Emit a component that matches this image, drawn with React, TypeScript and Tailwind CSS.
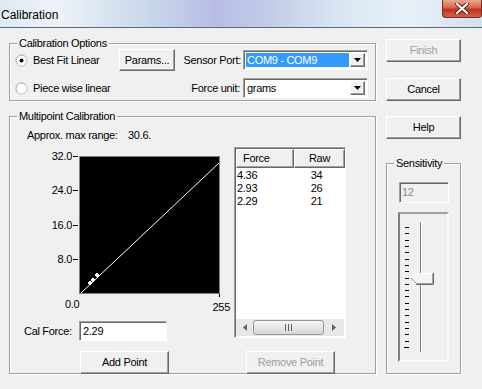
import React from 'react';

const raised =
  'bg-[#f0f0f0] border border-t-white border-l-white border-r-[#696969] border-b-[#696969] shadow-[inset_-1px_-1px_0_#a0a0a0]';
const sunken =
  'border border-t-[#a0a0a0] border-l-[#a0a0a0] border-r-white border-b-white shadow-[inset_1px_1px_0_#696969]';
const etched = 'border border-[#a0a0a0] shadow-[inset_1px_1px_0_#fff,1px_1px_0_#fff]';

const Radio = ({ checked }: { checked?: boolean }) => (
  <svg width="13" height="13" viewBox="0 0 13 13" className="shrink-0">
    <circle cx="6.5" cy="6.5" r="5.5" fill="#fff" stroke="#a0a0a0" />
    <path d="M2.6 10.4 A5.5 5.5 0 0 0 10.4 2.6" fill="none" stroke="#e3e3e3" />
    {checked && <circle cx="6.5" cy="6.5" r="2" fill="#000" />}
  </svg>
);

const Button = ({ label, disabled, className }: { label: string; disabled?: boolean; className?: string }) => (
  <div className={`${raised} flex items-center justify-center ${disabled ? 'text-[#a0a0a0]' : 'text-black'} ${className ?? ''}`}>
    {label}
  </div>
);

const Select = ({ value, selected }: { value: string; selected?: boolean }) => (
  <div className={`${sunken} bg-white w-[125px] h-[20px] flex items-stretch p-[2px]`}>
    <div className={`flex-1 flex items-center pl-[1px] ${selected ? 'bg-[#3399ff] text-white' : 'text-black'}`}>{value}</div>
    <div className={`${raised} w-[15px] ml-[1px] flex items-center justify-center`}>
      <svg width="7" height="4" viewBox="0 0 7 4">
        <path d="M0 0h7L3.5 4z" fill="#000" />
      </svg>
    </div>
  </div>
);

const Legend = ({ children }: { children: React.ReactNode }) => (
  <span className="absolute -top-[8px] left-[7px] px-[2px] bg-[#f0f0f0] leading-[14px]">{children}</span>
);

const rows = [
  { force: '4.36', raw: '34' },
  { force: '2.93', raw: '26' },
  { force: '2.29', raw: '21' },
];

const yLabels = [
  { label: '32.0', top: -7 },
  { label: '24.0', top: 27 },
  { label: '16.0', top: 62 },
  { label: '8.0', top: 96 },
];

const ticks = Array.from({ length: 20 }, (_, i) => i);

export default function App() {
  return (
    <div className="w-[482px] h-[389px] overflow-hidden bg-[#f0f0f0] text-[11px] tracking-[-0.3px] font-['Liberation_Sans',Arial,sans-serif] text-black select-none">
      {/* title bar */}
      <div className="relative h-[28px] border-b border-[#5a6a7a] bg-[linear-gradient(90deg,#dfe9f3_0%,#eef3f8_12%,#c9d8ea_30%,#b9bde6_45%,#c2cbe8_55%,#d8e6f2_70%,#e9f1f8_85%,#cfe0ee_100%)]">
        <span className="absolute left-[1px] top-[7px] text-[12px] tracking-normal leading-[16px]">Calibration</span>
        <div className="absolute right-0 top-0 w-[40px] h-[18px] rounded-b-[4px] border border-t-0 border-[#7a2a20] bg-[linear-gradient(180deg,#e9a796_0%,#d9644e_45%,#c2331c_55%,#d0604a_100%)] flex items-center justify-center">
          <svg width="14" height="11" viewBox="0 0 14 11">
            <path d="M2 1l10 9M12 1L2 10" stroke="#5a2018" strokeWidth="4" strokeLinecap="round" />
            <path d="M2 1l10 9M12 1L2 10" stroke="#fff" strokeWidth="2.2" strokeLinecap="round" />
          </svg>
        </div>
      </div>

      <div className="flex pl-[9px]">
        {/* left column */}
        <div className="w-[367px]">
          {/* Calibration Options */}
          <div className={`relative mt-[15px] h-[58px] ${etched} pl-[5px] pr-[7px] pt-[5px]`}>
            <Legend>Calibration Options</Legend>
            <div className="flex items-center h-[22px]">
              <div className="w-[104px] flex items-center gap-[5px]">
                <Radio checked />
                <span>Best Fit Linear</span>
              </div>
              <Button label="Params..." className="w-[56px] h-[22px]" />
              <span className="flex-1 text-right pr-[2px]">Sensor Port:</span>
              <Select value="COM9 - COM9" selected />
            </div>
            <div className="flex items-center h-[22px] mt-[6px]">
              <div className="w-[104px] flex items-center gap-[5px]">
                <Radio />
                <span>Piece wise linear</span>
              </div>
              <span className="flex-1 text-right pr-[3px]">Force unit:</span>
              <Select value="grams" />
            </div>
          </div>

          {/* Multipoint Calibration */}
          <div className={`relative mt-[15px] h-[258px] ${etched}`}>
            <Legend>Multipoint Calibration</Legend>
            <div className="flex">
              <div className="w-[224px]">
                <div className="pt-[12px] pl-[17px] leading-[13px] flex">
                  <span className="w-[101px]">Approx. max range:</span>
                  <span>30.6.</span>
                </div>
                {/* chart */}
                <div className="relative ml-[69px] mt-[14px] w-[141px] h-[138px] border border-[#808080] bg-black">
                  {yLabels.map((y) => (
                    <div key={y.label} className="absolute right-[141px] flex items-center leading-[13px]" style={{ top: y.top }}>
                      <span>{y.label}</span>
                      <span className="ml-[1px] w-[5px] h-[1px] bg-black" />
                    </div>
                  ))}
                  <span className="absolute -left-[15px] top-[141px] leading-[13px]">0.0</span>
                  <span className="absolute right-[-1px] top-[137px] w-[1px] h-[3px] bg-black" />
                  <span className="absolute -right-[11px] top-[144px] leading-[13px]">255</span>
                  <svg width="139" height="136" viewBox="0 0 139 136" className="block">
                    <path d="M1 136L139 6" stroke="#fff" strokeWidth="1" />
                    <path d="M8 126h4M10 124v4M11 123h4M13 121v4M15 118h4M17 116v4" stroke="#fff" strokeWidth="2" />
                  </svg>
                </div>
                <div className="flex items-center mt-[27px]">
                  <span className="w-[69px] pl-[14px]">Cal Force:</span>
                  <div className={`${sunken} bg-white w-[88px] h-[20px] flex items-center pl-[3px]`}>2.29</div>
                </div>
              </div>

              {/* list */}
              <div className={`mt-[30px] w-[112px] h-[191px] ${sunken} bg-white flex flex-col`}>
                <div className="flex h-[19px] ml-[1px] mt-[1px]">
                  <div className={`${raised} w-[58px] pl-[6px] flex items-center`}>Force</div>
                  <div className={`${raised} flex-1 flex items-center justify-center`}>Raw</div>
                </div>
                <div className="flex-1 pt-[1px]">
                  {rows.map((r) => (
                    <div key={r.force} className="flex h-[13px] leading-[13px]">
                      <span className="w-[57px] pl-[2px]">{r.force}</span>
                      <span className="flex-1 text-center pr-[4px]">{r.raw}</span>
                    </div>
                  ))}
                </div>
                {/* horizontal scrollbar */}
                <div className="h-[17px] mx-[1px] mb-[1px] bg-[#e8e8e8] flex items-center">
                  <div className="w-[17px] flex items-center justify-center">
                    <svg width="4" height="7" viewBox="0 0 4 7"><path d="M4 0v7L0 3.5z" fill="#606060" /></svg>
                  </div>
                  <div className="w-[71px] h-[15px] rounded-[3px] border border-[#979797] bg-[linear-gradient(180deg,#f4f4f4_0%,#e6e6e6_50%,#d6d6d6_100%)] flex items-center justify-center gap-[2px]">
                    <span className="w-[1px] h-[7px] bg-[#606060]" />
                    <span className="w-[1px] h-[7px] bg-[#606060]" />
                    <span className="w-[1px] h-[7px] bg-[#606060]" />
                  </div>
                  <div className="flex-1 flex items-center justify-center">
                    <svg width="4" height="7" viewBox="0 0 4 7"><path d="M0 0v7L4 3.5z" fill="#606060" /></svg>
                  </div>
                </div>
              </div>
            </div>

            <div className="flex mt-[10px]">
              <Button label="Add Point" className="ml-[70px] w-[89px] h-[23px]" />
              <Button label="Remove Point" disabled className="ml-[77px] w-[89px] h-[23px]" />
            </div>
          </div>
        </div>

        {/* right column */}
        <div className="ml-[10px] w-[75px] flex flex-col">
          <Button label="Finish" disabled className="mt-[11px] h-[23px]" />
          <Button label="Cancel" className="mt-[16px] h-[23px]" />
          <Button label="Help" className="mt-[15px] h-[23px]" />

          <div className={`relative mt-[24px] h-[211px] ${etched} pl-[12px]`}>
            <Legend>Sensitivity</Legend>
            <div className="mt-[18px] w-[50px] h-[21px] border border-t-[#a0a0a0] border-l-[#a0a0a0] border-r-white border-b-white shadow-[inset_1px_1px_0_#696969] bg-[#f0f0f0] text-[#8a8a8a] flex items-center pl-[2px]">
              12
            </div>
            <div className="relative mt-[9px] -ml-[1px] w-[51px] h-[150px] border-2 border-t-[#a0a0a0] border-l-[#808080] border-r-[#fafafa] border-b-[#fafafa]">
              {/* ticks */}
              <div className="absolute left-[5px] top-[13px] flex flex-col">
                {ticks.map((t) => (
                  <div key={t} className="h-[6.32px] flex items-start">
                    <span className={`${t === 19 ? 'w-[5px] -ml-[1px]' : 'w-[4px]'} h-[1px] bg-black`} />
                  </div>
                ))}
              </div>
              {/* track */}
              <div className="absolute left-[20px] top-[8px] w-[2px] h-[130px] border-l border-[#808080] bg-white" />
              {/* thumb */}
              <svg width="24" height="12" viewBox="0 0 24 12" className="absolute left-[10px] top-[59px]">
                <path d="M0.5 4.5L4.5 0.5H22.5V10.5H6.5Z" fill="#f4f4f4" stroke="#ffffff" />
                <path d="M22.5 0.5V10.5H6.5L0.5 4.5" fill="none" stroke="#a0a0a0" />
                <path d="M23.5 0V11.5H6" fill="none" stroke="#696969" />
              </svg>
            </div>
          </div>
        </div>
      </div>
    </div>
  );
}
